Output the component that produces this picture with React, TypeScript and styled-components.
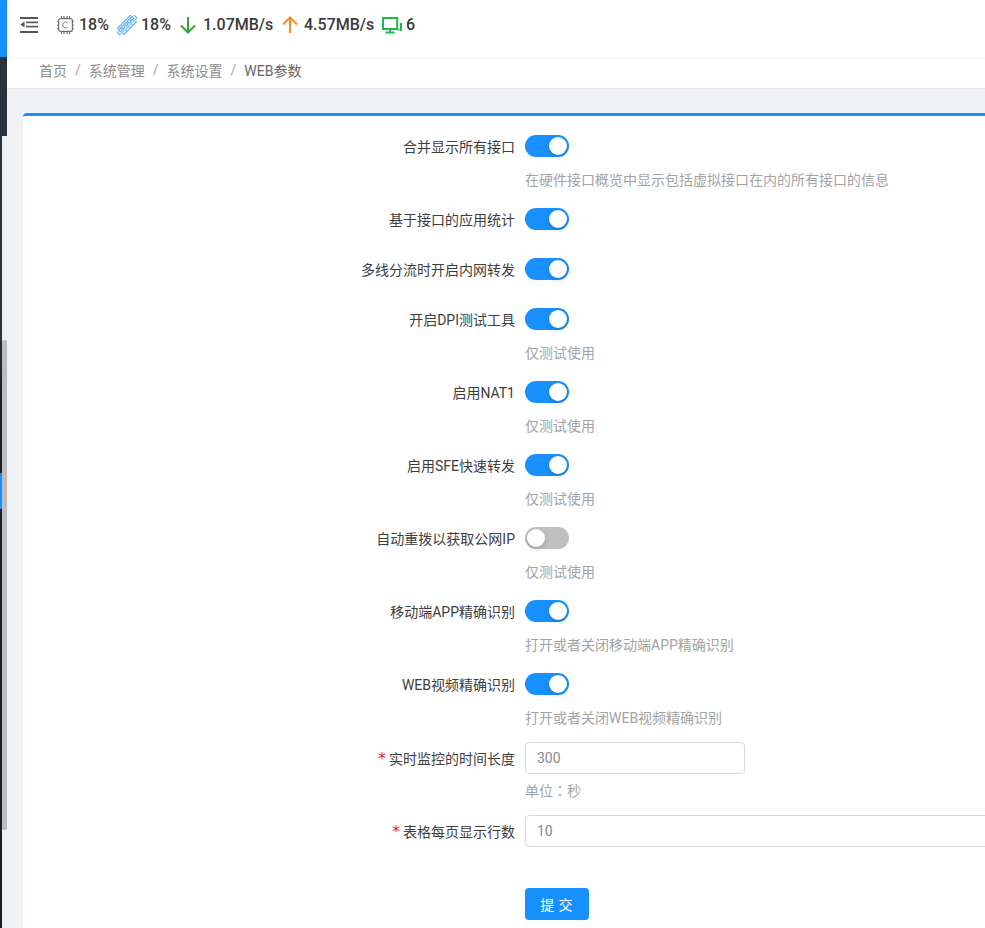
import React from 'react';
import styled, { createGlobalStyle } from 'styled-components';

const Global = createGlobalStyle`
  html, body { margin: 0; padding: 0; height: 100%; overflow: hidden; background: #f0f2f5; }
  body { font-family: Roboto, "Noto Sans CJK SC", "Liberation Sans", sans-serif; font-size: 14px; }
  * { box-sizing: border-box; }
`;

const Shell = styled.div`
  display: flex;
  width: 985px;
  height: 928px;
  overflow: hidden;
`;

const Sidebar = styled.aside`
  position: relative;
  flex: 0 0 7px;
  display: flex;
  flex-direction: column;
  background: linear-gradient(#2b333e 0, #2b333e 330px, #1b2129 390px, #1b2129 100%);
`;

const SidebarCap = styled.div`
  height: 57px;
  background: #1890ff;
`;

const ActiveMark = styled.div`
  position: absolute;
  left: 0;
  top: 473px;
  width: 2px;
  height: 36px;
  background: #1890ff;
`;

const ScrollTrack = styled.div`
  position: absolute;
  left: 2px;
  top: 136px;
  bottom: 0;
  width: 5px;
  background: #eff0f0;
`;

const ScrollThumb = styled.div`
  position: absolute;
  left: 0;
  top: 204px;
  width: 5px;
  height: 490px;
  border-radius: 2px;
  background: #bdbdbd;
`;

const Main = styled.div`
  flex: 1;
  min-width: 0;
  display: flex;
  flex-direction: column;
`;

const Header = styled.header`
  position: relative;
  height: 57px;
  flex: none;
  display: flex;
  align-items: center;
  padding: 0 0 7px 13px;
  background: #fff;
  box-shadow: 0 1px 4px rgba(0, 21, 41, 0.06);
`;

const MenuButton = styled.span`
  display: flex;
  width: 18px;
  height: 16px;
  margin-right: 19px;
`;

const IconSlot = styled.span<{ $w: number; $mr: number }>`
  display: flex;
  align-items: center;
  justify-content: center;
  flex: none;
  width: ${(p) => p.$w}px;
  height: 24px;
  margin-right: ${(p) => p.$mr}px;
`;

const Stat = styled.span<{ $w: number }>`
  flex: none;
  width: ${(p) => p.$w}px;
  font-size: 16px;
  font-weight: 500;
  line-height: 24px;
  color: #3a3a3a;
  white-space: nowrap;
`;

const Crumbs = styled.nav`
  height: 32px;
  flex: none;
  display: flex;
  align-items: center;
  padding: 0 0 5px 32px;
  background: #fff;
  border-bottom: 1px solid #e6e8eb;
  font-size: 14px;
  color: #8c8c8c;
`;

const CrumbSep = styled.span`
  margin: 0 8px;
  color: #a6a6a6;
`;

const CrumbLast = styled.span`
  color: #666;
`;

const Card = styled.section`
  flex: 1;
  margin: 24px 0 0 16px;
  padding-top: 14px;
  background: #fff;
  border-top: 3px solid #1890ff;
  border-top-left-radius: 4px;
  overflow: hidden;
`;

const Row = styled.div<{ $mb: number }>`
  display: flex;
  margin-bottom: ${(p) => p.$mb}px;
`;

const Label = styled.label`
  flex: 0 0 502px;
  height: 32px;
  padding-right: 10px;
  display: flex;
  align-items: center;
  justify-content: flex-end;
  font-size: 14px;
  color: #3d3d3d;
  white-space: nowrap;
`;

const Required = styled.span`
  margin-right: 3px;
  color: #f5222d;
  font-family: "DejaVu Sans", sans-serif;
  font-size: 16px;
`;

const Control = styled.div`
  flex: none;
  min-height: 32px;
`;

const SwitchLine = styled.div`
  height: 32px;
  display: flex;
  align-items: center;
`;

const Track = styled.span<{ $on: boolean }>`
  position: relative;
  display: block;
  width: 44px;
  height: 22px;
  border-radius: 11px;
  background: ${(p) => (p.$on ? '#1890ff' : '#bfbfbf')};
`;

const Knob = styled.span<{ $on: boolean }>`
  position: absolute;
  top: 2px;
  left: ${(p) => (p.$on ? '24px' : '2px')};
  width: 18px;
  height: 18px;
  border-radius: 50%;
  background: #fff;
  box-shadow: 0 2px 4px rgba(0, 35, 11, 0.2);
`;

const Help = styled.div<{ $mt: number }>`
  margin-top: ${(p) => p.$mt}px;
  font-size: 14px;
  line-height: 22px;
  color: #a3a3a3;
  white-space: nowrap;
`;

const CentredColon = styled.span`
  font-family: "Noto Sans CJK TC", sans-serif;
`;

const Field = styled.input<{ $w: number }>`
  display: block;
  width: ${(p) => p.$w}px;
  height: 32px;
  padding: 0 11px;
  border: 1px solid #d9d9d9;
  border-radius: 4px;
  background: #fff;
  font: 400 14px Roboto, sans-serif;
  color: #8a8a8a;
  outline: none;
`;

const Actions = styled.div`
  margin: 41px 0 0 502px;
`;

const Submit = styled.button`
  width: 64px;
  height: 32px;
  padding: 0 0 0 3px;
  border: 0;
  border-radius: 4px;
  background: #1890ff;
  color: #fff;
  font: 400 14px "Noto Sans CJK SC", sans-serif;
  letter-spacing: 0.3em;
`;

const InputRow = styled(Row)`
  padding-top: 1px;
`;

type Item = { label: string; on?: boolean; help?: string };

const items: Item[] = [
  { label: '合并显示所有接口', on: true, help: '在硬件接口概览中显示包括虚拟接口在内的所有接口的信息' },
  { label: '基于接口的应用统计', on: true },
  { label: '多线分流时开启内网转发', on: true },
  { label: '开启DPI测试工具', on: true, help: '仅测试使用' },
  { label: '启用NAT1', on: true, help: '仅测试使用' },
  { label: '启用SFE快速转发', on: true, help: '仅测试使用' },
  { label: '自动重拨以获取公网IP', on: false, help: '仅测试使用' },
  { label: '移动端APP精确识别', on: true, help: '打开或者关闭移动端APP精确识别' },
  { label: 'WEB视频精确识别', on: true, help: '打开或者关闭WEB视频精确识别' },
];

const MenuIcon = () => (
  <svg width="18" height="16" viewBox="0 0 18 16" fill="#555">
    <rect x="0" y="0" width="18" height="2" />
    <rect x="6" y="4.6" width="12" height="1.6" />
    <rect x="6" y="8.8" width="12" height="1.6" />
    <rect x="0" y="14" width="18" height="2" />
    <path d="M4.5 4.4v6.2L0.4 7.5z" />
  </svg>
);

const CpuIcon = () => (
  <svg width="17" height="18" viewBox="0 0 17 18" fill="none" stroke="#707070" strokeWidth="1.2">
    <rect x="1.6" y="2.6" width="13.8" height="12.8" rx="2" />
    <path d="M4.5 0v2M7 0v2M10 0v2M12.5 0v2M4.5 16v2M7 16v2M10 16v2M12.5 16v2M0 5.5h1.5M0 9h1.5M0 12.5h1.5M15.5 5.5H17M15.5 9H17M15.5 12.5H17" />
    <path d="M10.8 6.8a3 3 0 1 0 0 4.4" strokeWidth="0.9" />
  </svg>
);

const MemoryIcon = () => (
  <svg width="20" height="20" viewBox="0 0 20 20" fill="#eaf6fe" stroke="#4aa8ee" strokeWidth="1">
    <g transform="rotate(-45 10 10)">
      <rect x="-2" y="5.5" width="24" height="9" rx="0.6" />
      <rect x="0.5" y="7.4" width="2.6" height="2.8" fill="#fff" />
      <rect x="4.6" y="7.4" width="2.6" height="2.8" fill="#fff" />
      <rect x="8.7" y="7.4" width="2.6" height="2.8" fill="#fff" />
      <rect x="12.8" y="7.4" width="2.6" height="2.8" fill="#fff" />
      <rect x="16.9" y="7.4" width="2.6" height="2.8" fill="#fff" />
      <path d="M-2 12h24M1.8 12v2.5M5.9 12v2.5M10 12v2.5M14.1 12v2.5M18.2 12v2.5" strokeWidth="0.8" />
    </g>
  </svg>
);

const DownIcon = () => (
  <svg width="16" height="18" viewBox="0 0 16 18" fill="none" stroke="#3aa335" strokeWidth="2">
    <path d="M8 1v15.5M1 9.5l7 7 7-7" />
  </svg>
);

const UpIcon = () => (
  <svg width="16" height="18" viewBox="0 0 16 18" fill="none" stroke="#f58b2b" strokeWidth="2">
    <path d="M8 17V1.5M1 8.5l7-7 7 7" />
  </svg>
);

const ScreenIcon = () => (
  <svg width="20" height="17" viewBox="0 0 20 17" fill="none" stroke="#1bb84c" strokeWidth="2">
    <rect x="1" y="1" width="14.2" height="11" />
    <path d="M8 12v3M3.5 15.6h9" />
    <path d="M19 6v8" />
    <path d="M15 12.8h4" strokeWidth="1.2" />
  </svg>
);

export default function App() {
  return (
    <>
      <Global />
      <Shell>
        <Sidebar>
          <SidebarCap />
          <ActiveMark />
          <ScrollTrack>
            <ScrollThumb />
          </ScrollTrack>
        </Sidebar>
        <Main>
          <Header>
            <MenuButton><MenuIcon /></MenuButton>
            <IconSlot $w={17} $mr={5}><CpuIcon /></IconSlot>
            <Stat $w={38}>18%</Stat>
            <IconSlot $w={20} $mr={4}><MemoryIcon /></IconSlot>
            <Stat $w={39}>18%</Stat>
            <IconSlot $w={16} $mr={7}><DownIcon /></IconSlot>
            <Stat $w={79}>1.07MB/s</Stat>
            <IconSlot $w={16} $mr={6}><UpIcon /></IconSlot>
            <Stat $w={78}>4.57MB/s</Stat>
            <IconSlot $w={20} $mr={4}><ScreenIcon /></IconSlot>
            <Stat $w={12}>6</Stat>
          </Header>
          <Crumbs>
            <span>首页</span>
            <CrumbSep>/</CrumbSep>
            <span>系统管理</span>
            <CrumbSep>/</CrumbSep>
            <span>系统设置</span>
            <CrumbSep>/</CrumbSep>
            <CrumbLast>WEB参数</CrumbLast>
          </Crumbs>
          <Card>
            {items.map((it) => (
              <Row key={it.label} $mb={it.help ? 12 : 18}>
                <Label>{it.label}</Label>
                <Control>
                  <SwitchLine>
                    <Track $on={!!it.on}><Knob $on={!!it.on} /></Track>
                  </SwitchLine>
                  {it.help && <Help $mt={7}>{it.help}</Help>}
                </Control>
              </Row>
            ))}
            <InputRow $mb={13}>
              <Label><Required>*</Required>实时监控的时间长度</Label>
              <Control>
                <Field $w={220} defaultValue="300" />
                <Help $mt={5}>单位<CentredColon>：</CentredColon>秒</Help>
              </Control>
            </InputRow>
            <Row $mb={0}>
              <Label><Required>*</Required>表格每页显示行数</Label>
              <Control>
                <Field $w={620} defaultValue="10" />
              </Control>
            </Row>
            <Actions>
              <Submit>提交</Submit>
            </Actions>
          </Card>
        </Main>
      </Shell>
    </>
  );
}
